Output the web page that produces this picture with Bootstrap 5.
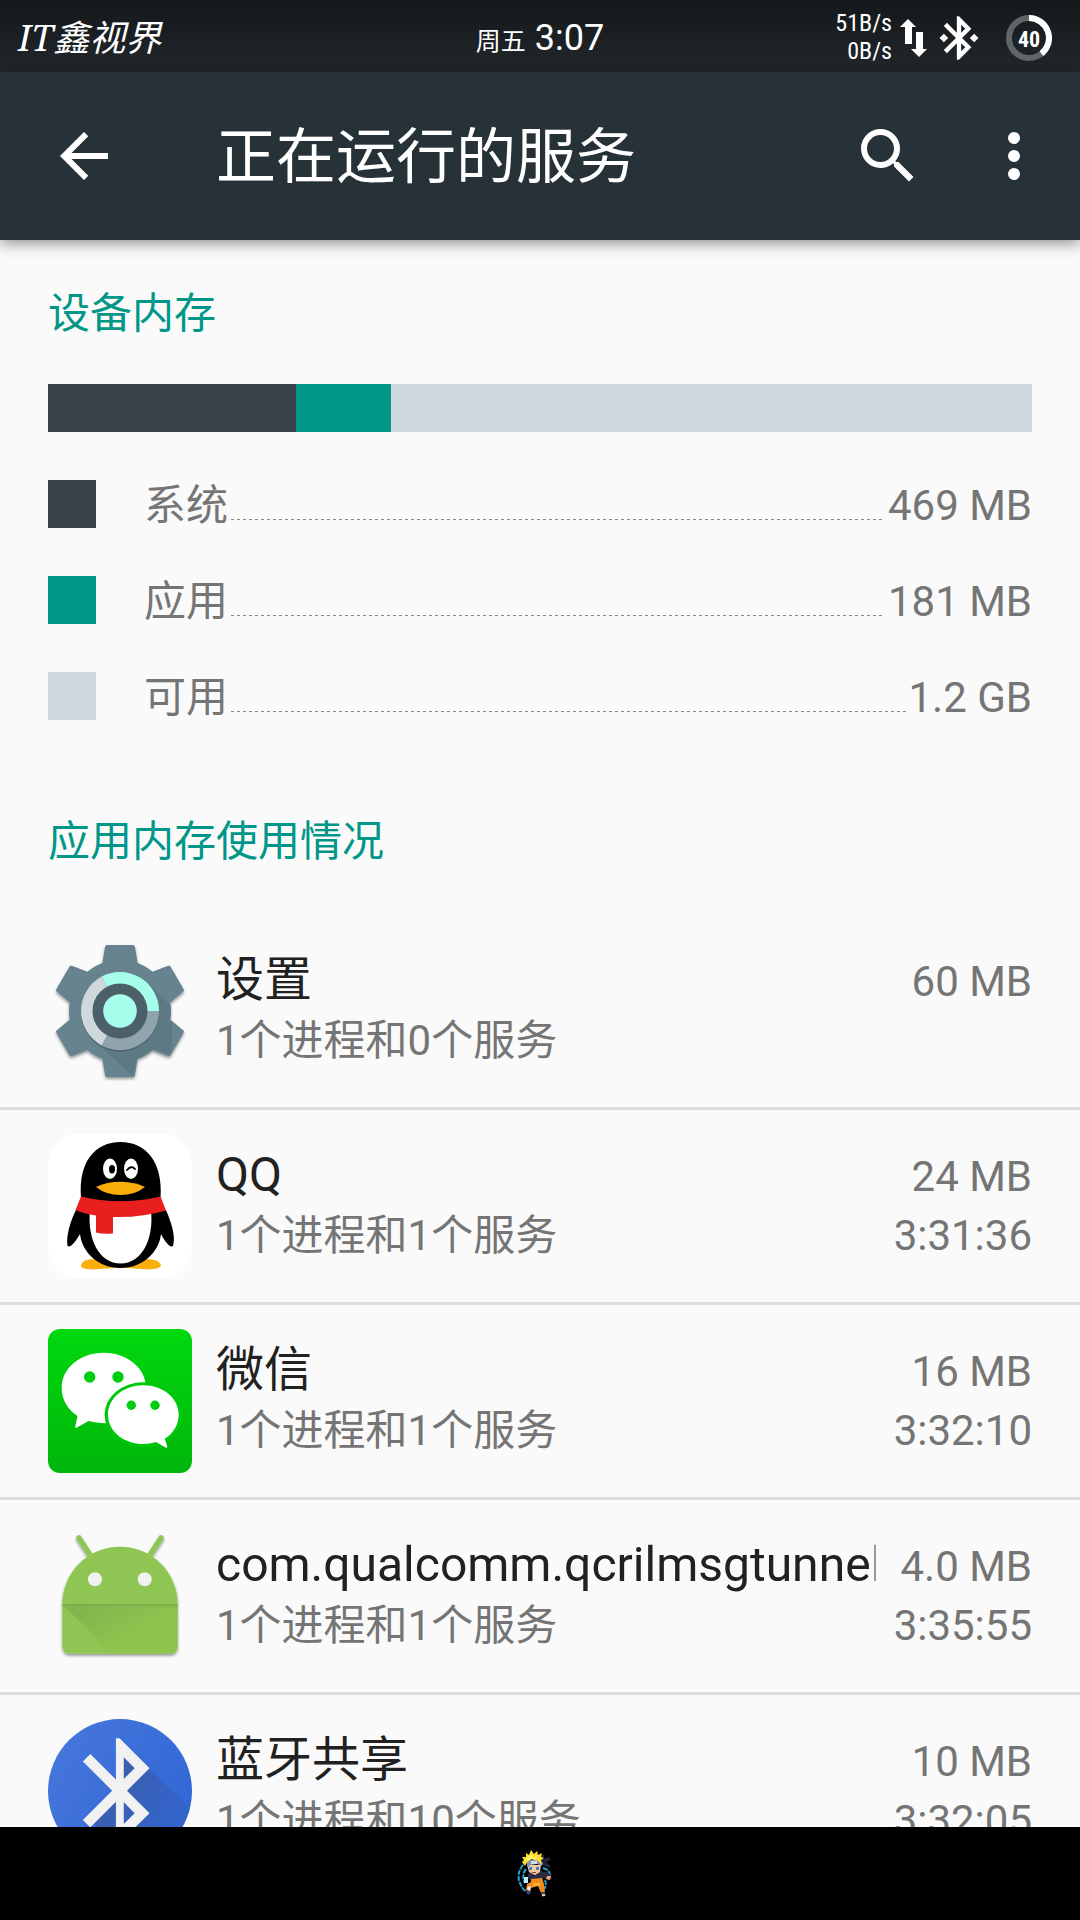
<!DOCTYPE html>
<html lang="zh-CN">
<head>
<meta charset="utf-8">
<meta name="viewport" content="width=device-width, initial-scale=1">
<title>正在运行的服务</title>
<link href="https://cdn.jsdelivr.net/npm/bootstrap@5.3.0/dist/css/bootstrap.min.css" rel="stylesheet">
<style>
  body { font-family: Roboto, "Noto Sans CJK SC", sans-serif; background: #fafafa; color: #212121; font-size: 42px; }
  svg { display: block; flex: none; }
  .status-strip { display: grid; grid-template-columns: 1fr auto 1fr; height: 72px; padding: 0 18px; background: linear-gradient(#14181b, #22272b); font-size: 36px; line-height: 68px; }
  .status-icons { padding-right: 10px; }
  .carrier { font-family: "Noto Serif", "Liberation Serif", "Noto Sans CJK SC", serif; font-style: italic; }
  .weekday { font-size: 25px; }
  .speed { font-family: "Roboto Condensed", Roboto, sans-serif; font-size: 24px; line-height: 28px; padding-bottom: 2px; margin-right: 8px; }
  .link-icon { margin: 0 15px 0 6px; }
  .battery-text { font: bold 22px "Roboto Condensed", Roboto, sans-serif; }
  .app-bar { height: 168px; padding: 0 30px 0 48px; background: #263238; box-shadow: 0 3px 14px rgba(0,0,0,.45); z-index: 2; }
  .app-bar h1 { font-size: 60px; line-height: 72px; padding-left: 96px; }
  .tool-gap { gap: 54px; }
  .section-title { font-size: 42px; line-height: 48px; font-weight: 400; color: #009688; }
  .memory { padding: 50px 48px 0; }
  .meter, .swatch { height: 48px; }
  .meter { margin-top: 46px; }
  .legend { margin-top: 48px; gap: 46px; }
  .swatch { width: 48px; margin-right: 48px; flex: none; }
  .c-system { background: #384248; }
  .c-apps { background: #009688; }
  .c-free { background: #cfd8dc; }
  .legend-text { line-height: 48px; padding-top: 2px; color: #757575; }
  .leader { height: 1px; margin: 0 3px; background: repeating-linear-gradient(90deg, #8a8a8a 0 3px, transparent 3px 6px); }
  .usage-title { padding: 96px 48px 49px; }
  .app-row { height: 195px; padding: 0 48px; gap: 24px; border-bottom: 3px solid #dcdcdc; }
  .app-icon { width: 144px; height: 144px; margin-top: 24px; }
  .app-text { padding-top: 37px; }
  .app-name { font-size: 48px; line-height: 56px; }
  .meta { line-height: 66px; color: #757575; }
  .first-line { gap: 24px; height: 56px; }
  .amount { line-height: 56px; color: #757575; }
  .fade-end { -webkit-mask-image: linear-gradient(90deg, #000 calc(100% - 8px), rgba(0,0,0,.4)); }
  .nav-strip { height: 93px; padding-right: 10px; }
</style>
<script src="https://cdn.jsdelivr.net/npm/bootstrap@5.3.0/dist/js/bootstrap.bundle.min.js"></script>
</head>
<body class="d-flex flex-column vh-100 overflow-hidden">

<div class="status-strip text-white align-items-center flex-shrink-0">
  <span class="carrier text-nowrap">IT鑫视界</span>
  <span class="text-nowrap pt-1"><span class="weekday">周五</span> 3:07</span>
  <div class="status-icons d-flex align-items-center justify-content-end">
    <div class="speed text-end">51B/s<br>0B/s</div>
    <svg width="27" height="38" viewBox="0 0 27 38" fill="#fff"><path d="M8 0l8 8h-4v17H5V8H0zM16 13h7v17h4l-8 8-8-8h5z"/></svg>
    <svg class="link-icon" width="52" height="52" viewBox="0 0 24 24" fill="#fff"><path d="M7 12l-2-2-2 2 2 2 2-2zm10.710-4.290L12 2h-1v7.590L6.410 5 5 6.410 10.590 12 5 17.590 6.410 19 11 14.410V22h1l5.710-5.710-4.300-4.290 4.300-4.290zM13 5.830l1.880 1.880L13 9.590V5.830zm1.880 10.460L13 18.170v-3.760l1.880 1.880zM19 10l-2 2 2 2 2-2-2-2z"/></svg>
    <svg width="52" height="46" viewBox="-6 0 52 46"><g fill="none" stroke-width="6"><circle cx="23" cy="23" r="20" stroke="#606568"/><path d="M23 3a20 20 0 0 1 12.500 35.600" stroke="#fff"/></g><text class="battery-text" x="23" y="32" text-anchor="middle" fill="#fff">40</text></svg>
  </div>
</div>

<header class="app-bar d-flex align-items-center flex-shrink-0 position-relative text-white">
  <button class="btn p-0 border-0" aria-label="返回"><svg width="72" height="72" viewBox="0 0 24 24" fill="#fff"><path d="M20 11H7.830l5.590-5.590L12 4l-8 8 8 8 1.410-1.410L7.830 13H20v-2z"/></svg></button>
  <h1 class="mb-0 pt-1 fw-normal flex-grow-1 text-nowrap">正在运行的服务</h1>
  <div class="d-flex tool-gap">
    <button class="btn p-0 border-0" aria-label="搜索"><svg width="72" height="72" viewBox="0 0 24 24" fill="#fff"><path d="M15.500 14h-.79l-.28-.27A6.470 6.470 0 0 0 16 9.500 6.500 6.500 0 1 0 9.500 16c1.610 0 3.090-.59 4.230-1.570l.27.28v.79l5 4.990L20.490 19l-4.990-5zm-6 0C7.010 14 5 11.990 5 9.500S7.010 5 9.500 5 14 7.010 14 9.500 11.990 14 9.500 14z"/></svg></button>
    <button class="btn p-0 border-0" aria-label="更多选项"><svg width="72" height="72" viewBox="0 0 24 24" fill="#fff"><circle cx="12" cy="6" r="2"/><circle cx="12" cy="12" r="2"/><circle cx="12" cy="18" r="2"/></svg></button>
  </div>
</header>

<main class="flex-grow-1 overflow-hidden">
  <section class="memory">
    <h2 class="section-title mb-0">设备内存</h2>
    <div class="meter d-flex c-free">
      <div class="c-system" style="width:25.2%"></div>
      <div class="c-apps" style="width:9.7%"></div>
    </div>
    <div class="legend d-flex flex-column">
      <div class="d-flex"><span class="swatch c-system"></span><div class="legend-text d-flex flex-grow-1 align-items-baseline"><span>系统</span><span class="leader flex-grow-1"></span><span>469 MB</span></div></div>
      <div class="d-flex"><span class="swatch c-apps"></span><div class="legend-text d-flex flex-grow-1 align-items-baseline"><span>应用</span><span class="leader flex-grow-1"></span><span>181 MB</span></div></div>
      <div class="d-flex"><span class="swatch c-free"></span><div class="legend-text d-flex flex-grow-1 align-items-baseline"><span>可用</span><span class="leader flex-grow-1"></span><span>1.2 GB</span></div></div>
    </div>
  </section>

  <h2 class="section-title usage-title mb-0">应用内存使用情况</h2>

  <ul class="list-unstyled mb-0">
    <li class="app-row d-flex">
      <svg class="app-icon" viewBox="0 0 144 144">
        <defs>
          <filter id="soft" x="-20%" y="-20%" width="140%" height="140%"><feDropShadow dx="0" dy="2" stdDeviation="1.500" flood-opacity=".4"/></filter>
          <path id="tooth" d="M-13-64H13L16-46Q17-41 25-40L30-36H-30L-25-40Q-17-41-16-46Z"/>
          <clipPath id="gearClip"><circle r="51"/><use href="#tooth" transform="rotate(120)"/><use href="#tooth" transform="rotate(180)"/></clipPath>
        </defs>
        <g transform="translate(72 72)">
          <g filter="url(#soft)" fill="#66838f" stroke="#66838f" stroke-width="4" stroke-linejoin="round">
            <circle r="49"/><use href="#tooth"/><use href="#tooth" transform="rotate(60)"/><use href="#tooth" transform="rotate(120)"/><use href="#tooth" transform="rotate(180)"/><use href="#tooth" transform="rotate(240)"/><use href="#tooth" transform="rotate(300)"/>
          </g>
          <path clip-path="url(#gearClip)" d="M28-28L52-4V60L14 66L-28 28Z" fill="#455a64" opacity=".25"/>
          <circle r="39" cy="2" fill="#37474f" opacity=".35"/>
          <g fill="none" stroke-width="12"><path d="M-15.500-29.100A33 33 0 0 1 33 0" stroke="#a7ffeb"/><path d="M33 0A33 33 0 0 1-15.500 29.100" stroke="#90a4ae"/><path d="M-15.500 29.100A33 33 0 0 1-15.500-29.100" stroke="#cfd8dc"/></g>
          <circle r="27.500" fill="#4b6069"/><circle r="16.800" fill="#a7ffeb"/>
        </g>
      </svg>
      <div class="app-text flex-grow-1 overflow-hidden">
        <div class="first-line d-flex align-items-baseline"><span class="app-name flex-grow-1">设置</span><span class="amount text-nowrap">60 MB</span></div>
        <div class="meta d-flex justify-content-between"><span>1个进程和0个服务</span></div>
      </div>
    </li>
    <li class="app-row d-flex">
      <svg class="app-icon" viewBox="0 0 144 144">
        <rect width="144" height="144" rx="30" fill="#fff"/>
        <path d="M33 131q1-6 14-6h51q13 0 15 6 0 4-13 4.500l-27-2-28 2Q32 135 33 131z" fill="#faae0b"/>
        <path d="M28 76C22 88 18 102 19.500 112c3 2 8-4 12.500-12 2 18 18 34 40.500 34S111 118 113 100c4 8 9 14 12 12 3-10-2-24-7-36z"/>
        <path d="M42 76C39 105 51 129.500 72.500 129.500S106 105 103 76z" fill="#fff"/>
        <path d="M33 64C30 28 47 8 72.500 8S115 28 112.500 64L73 72z"/>
        <path d="M33 62.500Q72.500 72 112.500 62.500L118 76.500Q92 84 65 83V99.500Q56 100.500 48 98.500V81.500Q36 79.500 27.500 76z" fill="#e81e1f"/>
        <ellipse cx="62" cy="34.700" rx="7" ry="10.300" fill="#fff"/><ellipse cx="83" cy="34.700" rx="7" ry="10.300" fill="#fff"/><ellipse cx="64" cy="35.300" rx="3" ry="4.200"/><path d="M79 36q4-5 8-1" fill="none" stroke="#000" stroke-width="1.800" stroke-linecap="round"/>
        <path d="M48 53Q59 47.500 73 47.700T97 53Q87 61 72.500 61T48 53z" fill="#faae0b"/>
      </svg>
      <div class="app-text flex-grow-1 overflow-hidden">
        <div class="first-line d-flex align-items-baseline"><span class="app-name flex-grow-1">QQ</span><span class="amount text-nowrap">24 MB</span></div>
        <div class="meta d-flex justify-content-between"><span>1个进程和1个服务</span><span>3:31:36</span></div>
      </div>
    </li>
    <li class="app-row d-flex">
      <svg class="app-icon" viewBox="0 0 144 144">
        <defs><linearGradient id="wx" x2="0" y2="1"><stop offset="0" stop-color="#00d90e"/><stop offset="1" stop-color="#00b50a"/></linearGradient></defs>
        <rect width="144" height="144" rx="12" fill="url(#wx)"/>
        <path d="M29.500 87C19 80 13.700 70 13.700 59 13.700 39 32 23.700 55.700 23.700S98 39 98 59 80 94.300 56 94.300Q48 94 40.500 92L29 98.500q-3 1-1.500-2z" fill="#fff"/>
        <ellipse cx="95.300" cy="85.700" rx="38.700" ry="32.500" fill="#00c70c"/>
        <path d="M116.700 109.700C126 104 130.700 95 130.700 85.700 130.700 69 115 56.300 95.300 56.300S60 69 60 85.700 76 115 95.300 115Q102 115 108 113L117.500 118.500q2.500 1 1.500-2z" fill="#fff"/>
        <g fill="#00cd0d"><circle cx="41.700" cy="48" r="5.700"/><circle cx="70" cy="48" r="5.700"/><circle cx="83.300" cy="76.300" r="4.700"/><circle cx="107" cy="76.300" r="4.700"/></g>
      </svg>
      <div class="app-text flex-grow-1 overflow-hidden">
        <div class="first-line d-flex align-items-baseline"><span class="app-name flex-grow-1">微信</span><span class="amount text-nowrap">16 MB</span></div>
        <div class="meta d-flex justify-content-between"><span>1个进程和1个服务</span><span>3:32:10</span></div>
      </div>
    </li>
    <li class="app-row d-flex">
      <svg class="app-icon" viewBox="0 0 144 144">
        <defs><linearGradient id="lip" x2="0" y2="1"><stop offset="0" stop-color="#7daa4c"/><stop offset="1" stop-color="#8bc34a" stop-opacity="0"/></linearGradient><linearGradient id="fold" x2=".7" y2=".5"><stop offset="0" stop-color="#7daa4c"/><stop offset="1" stop-color="#8cc44c"/></linearGradient></defs>
        <g filter="url(#soft)"><path d="M31 14L44 34M113 14L100 34" stroke="#8fc655" stroke-width="5.500" stroke-linecap="round"/><path d="M14.300 80.400a57.700 57.700 0 0 1 115.400 0v42.300a7 7 0 0 1-7 7H21.300a7 7 0 0 1-7-7z" fill="#8fc653"/></g>
        <path d="M14.300 80H129.700V122.700a7 7 0 0 1-7 7H64z" fill="url(#fold)" opacity=".8"/><rect x="14.300" y="80" width="115.400" height="6" fill="url(#lip)"/>
        <circle cx="47" cy="55.300" r="7" fill="#f1f1f1"/><circle cx="96.700" cy="55.300" r="7" fill="#f1f1f1"/>
      </svg>
      <div class="app-text flex-grow-1 overflow-hidden">
        <div class="first-line d-flex align-items-baseline"><span class="app-name fade-end flex-grow-1 overflow-hidden text-nowrap">com.qualcomm.qcrilmsgtunnel</span><span class="amount text-nowrap">4.0 MB</span></div>
        <div class="meta d-flex justify-content-between"><span>1个进程和1个服务</span><span>3:35:55</span></div>
      </div>
    </li>
    <li class="app-row d-flex">
      <svg class="app-icon" viewBox="0 0 144 144">
        <defs><linearGradient id="bt" x2="1" y2=".6"><stop offset="0" stop-color="#4878dc"/><stop offset="1" stop-color="#3267d6"/></linearGradient><linearGradient id="btShade" x1=".2" x2="1" y1=".2" y2=".6"><stop offset="0" stop-color="#3a5aa0"/><stop offset="1" stop-color="#3267d6"/></linearGradient><clipPath id="btClip"><circle cx="72" cy="72" r="72"/></clipPath></defs>
        <circle cx="72" cy="72" r="72" fill="url(#bt)"/>
        <path clip-path="url(#btClip)" d="M101 49L160 108V144H86L43 102 70 72 76 27z" fill="url(#btShade)" opacity=".8"/>
        <path transform="translate(8.700 8.800) scale(5.240)" fill="#f1f1f1" d="M17.710 7.710L12 2h-.7v7.890L6.410 5 5 6.410 10.590 12 5 17.590 6.410 19 11.300 14.110V22h.7l5.710-5.710-4.300-4.290 4.300-4.290zM12.800 5.630l2.080 2.080-2.080 2.080V5.630zm2.080 10.660L12.800 18.370v-4.160l2.080 2.080z"/>
      </svg>
      <div class="app-text flex-grow-1 overflow-hidden">
        <div class="first-line d-flex align-items-baseline"><span class="app-name flex-grow-1">蓝牙共享</span><span class="amount text-nowrap">10 MB</span></div>
        <div class="meta d-flex justify-content-between"><span>1个进程和10个服务</span><span>3:32:05</span></div>
      </div>
    </li>
  </ul>
</main>

<nav class="nav-strip bg-black d-flex align-items-center justify-content-center flex-shrink-0">
  <svg width="36" height="48" viewBox="0 0 36 48">
    <!-- chakra swirl -->
    <g fill="none" stroke="#2a9fc9" stroke-width="2" stroke-dasharray="5 1"><path d="M6 15Q-1 24 3 33T9 40M9 19Q4 25 8 33M26 18Q33 20 33 26M28 30Q30 36 27 39"/></g>
    <path d="M7 27h4v6H7z" fill="#bdf0ff"/>
    <!-- headband ribbon -->
    <path d="M22 10l3-6 3 1-2 4 6-2 2 3-5 2 5 4-2 2-8-4z" fill="#20223f"/>
    <!-- torso and arms -->
    <path d="M11 24l4-3h9l8 2 3 5-3 2-6-2-1 3H14l-3-3z" fill="#2c2a42"/>
    <path d="M30 26h4l-1 4-4-1z" fill="#e9a878"/>
    <!-- trousers -->
    <path d="M14 29l11-1 2 6 1 9h-4l-3-7-7 2-1 4-4-2 1-6 4-2z" fill="#ef8a1b"/>
    <path d="M16 33h7v3h-7z" fill="#ffad34"/>
    <path d="M11 36l3 1-1 4-3-2z" fill="#e8e2e0"/>
    <path d="M10 40l4 2-2 3-3-2zM24 42h4l1 4-4 1z" fill="#394078"/>
    <path d="M25 44h3v2h-3z" fill="#f2bd93"/>
    <!-- face -->
    <path d="M10 15h14l-1 7-5 3-6-3z" fill="#f6c89d"/>
    <path d="M12 17h3v3h-3zM19 17h3v3h-3z" fill="#3c83c9"/>
    <path d="M15 22h4v1h-4z" fill="#8a4536"/>
    <path d="M9 12l5-2h8l4 3-1 3-5-2-6 1-3 2z" fill="#8790b3"/><path d="M14 11h6v3h-6z" fill="#d3d9ea"/>
    <!-- hair -->
    <path d="M5 12l2-2-2-3 4 0 0-4 3 2 2-5 3 4 3-3 1 4 4-2-1 4 3 1-3 2 1 5-4-4-6-2-5 3-2 4z" fill="#ffe02e"/>
    <path d="M10 8l4-4 2 4 4-3-1 5-5-1-4 3z" fill="#fff36b"/>
  </svg>
</nav>
</body>
</html>
